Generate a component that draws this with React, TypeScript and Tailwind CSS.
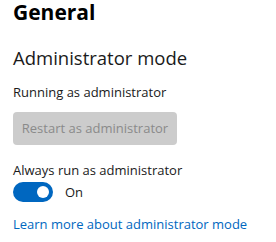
import React, { useState } from 'react';

const App: React.FC = () => {
  const [alwaysAdmin, setAlwaysAdmin] = useState(true);

  return (
    <div className="w-[276px] h-[242px] bg-white pl-[13px] font-['Segoe_UI','Open_Sans',sans-serif] text-[#1a1a1a]">
      {/* Page title */}
      <h1 className="-mt-[2px] text-[21px] font-bold leading-[28px] text-black">General</h1>

      {/* Section */}
      <h2 className="mt-[18px] text-[18.5px] leading-[28px]">Administrator mode</h2>
      <p className="mt-[10px] text-[13px] leading-[20px]">Running as administrator</p>
      <button
        disabled
        className="mt-[10px] w-[164px] h-[33px] rounded-[4px] bg-[#cccccc] text-[13px] text-[#8a8a8a]"
      >
        Restart as administrator
      </button>

      <p className="mt-[15px] text-[13px] leading-[20px]">Always run as administrator</p>
      <div className="mt-[2px] flex items-center gap-[12px]">
        <button
          onClick={() => setAlwaysAdmin(!alwaysAdmin)}
          className={`relative w-[40px] h-[20px] rounded-full ${
            alwaysAdmin ? 'bg-[#0067c0]' : 'bg-white border border-[#5d5d5d]'
          }`}
        >
          <span
            className={`absolute w-[12px] h-[12px] rounded-full ${
              alwaysAdmin ? 'left-[24px] top-[4px] bg-white' : 'left-[4px] top-[3px] bg-[#5d5d5d]'
            }`}
          />
        </button>
        <span className="text-[13px] leading-[20px]">{alwaysAdmin ? 'On' : 'Off'}</span>
      </div>

      <a href="#" className="block mt-[12px] text-[13px] leading-[20px] text-[#0067c0]">
        Learn more about administrator mode
      </a>
    </div>
  );
};

export default App;
